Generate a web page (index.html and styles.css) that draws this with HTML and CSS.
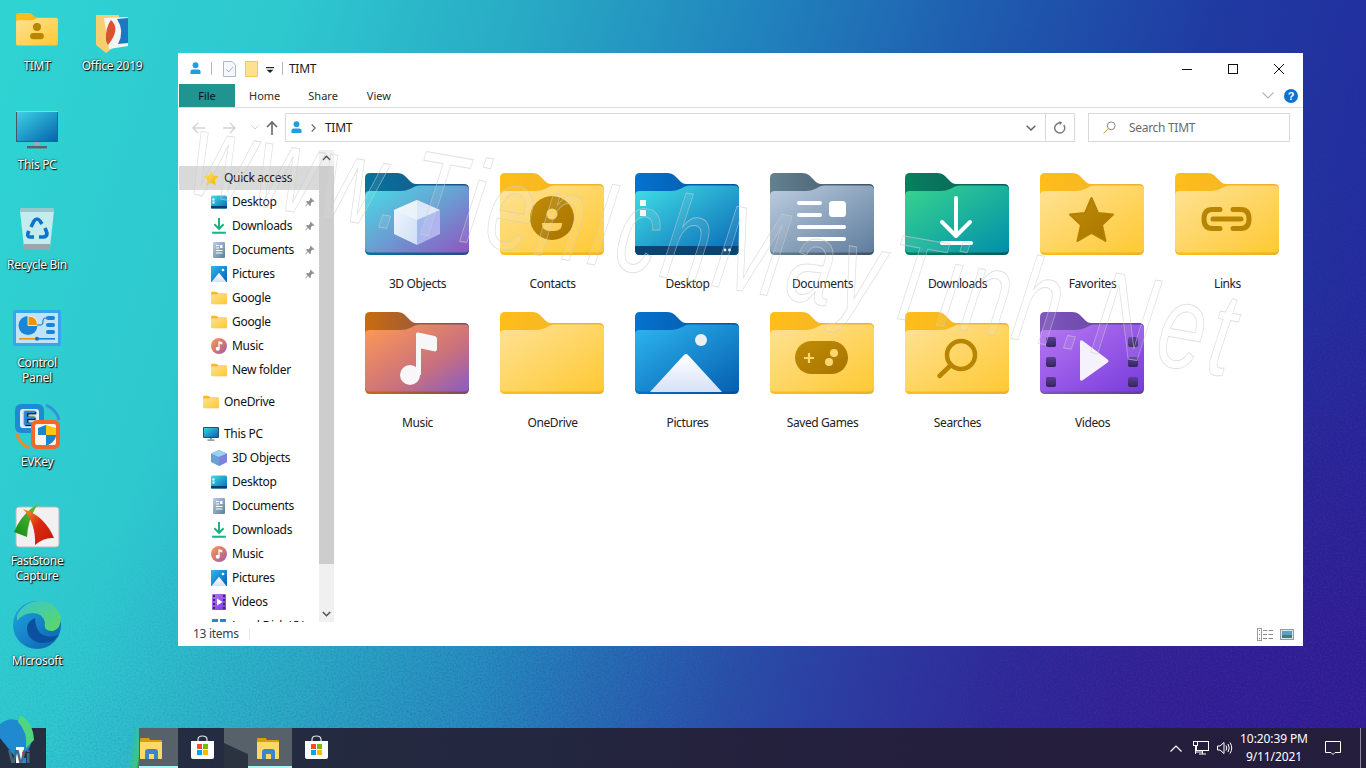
FILE: index.html
```html
<!DOCTYPE html>
<html lang="en">
<head>
<meta charset="utf-8">
<title>TIMT</title>
<link rel="stylesheet" href="styles.css">
</head>
<body>
<svg class="defs" width="0" height="0" aria-hidden="true">
  <defs>
    <linearGradient id="yF" x1="0" y1="0" x2="1" y2="1"><stop offset="0" stop-color="#fee295"/><stop offset="1" stop-color="#ffc933"/></linearGradient>
    <linearGradient id="yB" x1="0" y1="0" x2="1" y2="0"><stop offset="0" stop-color="#ffbe19"/><stop offset="1" stop-color="#edb02e"/></linearGradient>
    <linearGradient id="cubeF" x1="0" y1="0" x2="1" y2="1"><stop offset="0" stop-color="#45dfe6"/><stop offset=".5" stop-color="#6a9ed2"/><stop offset="1" stop-color="#8f55c2"/></linearGradient>
    <linearGradient id="cubeB" x1="0" y1="0" x2="1" y2="0"><stop offset="0" stop-color="#05739c"/><stop offset="1" stop-color="#204f86"/></linearGradient>
    <linearGradient id="deskF" x1="0" y1="0" x2="1" y2="1"><stop offset="0" stop-color="#41e0e6"/><stop offset="1" stop-color="#0a67b6"/></linearGradient>
    <linearGradient id="deskB" x1="0" y1="0" x2="1" y2="0"><stop offset="0" stop-color="#0573cf"/><stop offset="1" stop-color="#044f9c"/></linearGradient>
    <linearGradient id="docF" x1="0" y1="0" x2="1" y2="1"><stop offset="0" stop-color="#bccde0"/><stop offset="1" stop-color="#5f7d9c"/></linearGradient>
    <linearGradient id="docB" x1="0" y1="0" x2="1" y2="0"><stop offset="0" stop-color="#628290"/><stop offset="1" stop-color="#3f5064"/></linearGradient>
    <linearGradient id="dlF" x1="0" y1="0" x2="1" y2="1"><stop offset="0" stop-color="#37d58e"/><stop offset="1" stop-color="#008fab"/></linearGradient>
    <linearGradient id="dlB" x1="0" y1="0" x2="1" y2="0"><stop offset="0" stop-color="#0a7f5e"/><stop offset="1" stop-color="#065a5a"/></linearGradient>
    <linearGradient id="musF" x1="0" y1="0" x2="1" y2="1"><stop offset="0" stop-color="#ff9a52"/><stop offset=".62" stop-color="#c9707e"/><stop offset="1" stop-color="#8a5cc4"/></linearGradient>
    <linearGradient id="musB" x1="0" y1="0" x2="1" y2="0"><stop offset="0" stop-color="#c96c0e"/><stop offset="1" stop-color="#7a4a60"/></linearGradient>
    <linearGradient id="picF" x1="0" y1="0" x2="1" y2="1"><stop offset="0" stop-color="#2eb6f0"/><stop offset="1" stop-color="#055fb0"/></linearGradient>
    <linearGradient id="picM" x1="0" y1="0" x2="0" y2="1"><stop offset="0" stop-color="#ffffff"/><stop offset="1" stop-color="#d6e2f9"/></linearGradient>
    <linearGradient id="vidF" x1="0" y1="0" x2="1" y2="1"><stop offset="0" stop-color="#b678f2"/><stop offset="1" stop-color="#783bdb"/></linearGradient>
    <linearGradient id="vidB" x1="0" y1="0" x2="1" y2="0"><stop offset="0" stop-color="#7f57bd"/><stop offset="1" stop-color="#5c3f9c"/></linearGradient>
    <linearGradient id="vidS" x1="0" y1="0" x2="0" y2="1"><stop offset="0" stop-color="#5c3f92"/><stop offset="1" stop-color="#33235f"/></linearGradient>
    <linearGradient id="gold" x1="0" y1="0" x2="1" y2="1"><stop offset="0" stop-color="#c08c06"/><stop offset="1" stop-color="#a87400"/></linearGradient>
    <linearGradient id="cubeL" x1="0" y1="0" x2="1" y2="1"><stop offset="0" stop-color="#f2f7fc"/><stop offset="1" stop-color="#cfdff5"/></linearGradient>
    <linearGradient id="cubeR" x1="0" y1="0" x2="1" y2="1"><stop offset="0" stop-color="#94bdea"/><stop offset="1" stop-color="#beb0f0"/></linearGradient>
    <linearGradient id="star" x1="0" y1="0" x2="1" y2="1"><stop offset="0" stop-color="#ffe052"/><stop offset="1" stop-color="#f8b400"/></linearGradient>
    <linearGradient id="mon" x1="0" y1="0" x2="1" y2="1"><stop offset="0" stop-color="#3ad2e4"/><stop offset="1" stop-color="#0763ae"/></linearGradient>
    <linearGradient id="edgeA" x1="0" y1="0" x2="1" y2="1"><stop offset="0" stop-color="#1ea7e0"/><stop offset="1" stop-color="#0c5fb0"/></linearGradient>
    <linearGradient id="edgeB" x1="0" y1="0" x2="1" y2="1"><stop offset="0" stop-color="#37c6d0"/><stop offset="1" stop-color="#5fd85f"/></linearGradient>
    <linearGradient id="sailR" x1="0" y1="0" x2="1" y2="1"><stop offset="0" stop-color="#f0a020"/><stop offset=".45" stop-color="#dc2a12"/><stop offset="1" stop-color="#c01808"/></linearGradient>
    <linearGradient id="sailG" x1="1" y1="0" x2="0" y2="1"><stop offset="0" stop-color="#70c040"/><stop offset="1" stop-color="#0a8a14"/></linearGradient>
    <filter id="grain" x="0" y="0" width="100%" height="100%"><feTurbulence type="fractalNoise" baseFrequency=".55" numOctaves="2" seed="7"/><feColorMatrix values="0 0 0 0 .08  0 0 0 0 .03  0 0 0 0 .3  0 0 0 1.6 -.62"/></filter>
    <linearGradient id="grainFade" x1="0" y1="0" x2="1" y2="1"><stop offset=".38" stop-color="#fff" stop-opacity="0"/><stop offset=".75" stop-color="#fff"/></linearGradient>
    <mask id="grainMask"><rect width="1366" height="768" fill="url(#grainFade)"/></mask>

    <path id="fb" d="M5 0H32Q37 0 40 3L46 9Q48 11 51 11H99Q104 11 104 16V77Q104 82 99 82H5Q0 82 0 77V5Q0 0 5 0Z"/>
    <path id="ff" d="M0 22Q0 18 5 18H36Q41 18 45 16L50 13.5Q52 12.5 55 12.5H99Q104 12.5 104 17V75Q104 79.5 99 79.5H5Q0 79.5 0 75Z"/>

    <symbol id="i-folder" viewBox="0 0 104 82"><use href="#fb" fill="url(#yB)"/><use href="#ff" fill="url(#yF)"/></symbol>
    <symbol id="i-person" viewBox="0 0 12 14"><circle cx="6" cy="3.4" r="3.2" fill="#1f9fe0"/><path d="M0.5 13V10.5Q0.5 8 3 8H9Q11.5 8 11.5 10.5V13Z" fill="#1f9fe0"/></symbol>
    <symbol id="i-desktop" viewBox="0 0 16 13"><rect width="16" height="13" rx="1.5" fill="url(#deskF)"/><rect y="10.5" width="16" height="2.5" fill="#0a3f6a"/><rect x="1.5" y="3" width="2" height="2" fill="#fff"/><rect x="1.5" y="6" width="2" height="2" fill="#fff"/></symbol>
    <symbol id="i-down" viewBox="0 0 12 14"><path d="M6 0V9M2 5.5L6 9.5L10 5.5" fill="none" stroke="#17b083" stroke-width="1.7"/><rect y="12" width="12" height="1.8" fill="#18b48a"/></symbol>
    <symbol id="i-docs" viewBox="0 0 12 16"><rect width="12" height="16" rx="1" fill="url(#docF)"/><path d="M3 3.5H6M3 6H6M3 8.5H9.5M3 11H9.5" stroke="#fff"/><rect x="7" y="3" width="2.5" height="3" fill="#fff"/></symbol>
    <symbol id="i-pics" viewBox="0 0 14 14"><rect width="14" height="14" fill="url(#picF)"/><path d="M7 6L13.5 14H.5Z" fill="url(#picM)"/><circle cx="10.5" cy="3.5" r="1.2" fill="#fff"/></symbol>
    <symbol id="i-music" viewBox="0 0 16 16"><circle cx="8" cy="8" r="8" fill="url(#musF)"/><path d="M8 3.5V10.5" stroke="#fff" stroke-width="1.3"/><circle cx="6.7" cy="10.8" r="2" fill="#fff"/><path d="M8 3.3L11.3 4.3V6.6L8 5.6Z" fill="#fff"/></symbol>
    <symbol id="i-pc" viewBox="0 0 16 14"><rect width="16" height="11" rx="1" fill="#3a4a58"/><rect x="1" y="1" width="14" height="9" fill="url(#mon)"/><rect x="7" y="11" width="2" height="1.5" fill="#8a99a5"/><rect x="4.5" y="12.5" width="7" height="1.2" fill="#6a7884"/></symbol>
    <symbol id="i-cube" viewBox="0 0 16 16"><path d="M8 0L16 3.5V12L8 16L0 12V3.5Z" fill="#6a9fd8"/><path d="M8 0L16 3.5L8 7L0 3.5Z" fill="#9cd0ee"/><path d="M8 7L16 3.5V12L8 16Z" fill="#7a85d6"/></symbol>
    <symbol id="i-video" viewBox="0 0 14 16"><rect width="14" height="16" rx="1" fill="url(#vidF)"/><path d="M5 4.5L10.5 8L5 11.5Z" fill="#fff"/><path d="M1 2H3M1 6H3M1 10H3M1 14H3M11 2H13M11 6H13M11 10H13M11 14H13" stroke="#3a2a6a" stroke-width="2"/></symbol>
    <symbol id="i-pin" viewBox="0 0 10 10"><path d="M5.5 0.5L9.5 4.5L8.5 5L7.5 4.5L5.8 6.3L6 8L5 9L3 7L.8 9.4L.4 9L2.6 6.6L1 5L2 4L3.7 4.2L5.3 2.4L5 1.5Z" fill="#8f8f8f"/></symbol>
    <symbol id="i-explorer" viewBox="0 0 22 21"><path d="M1 0H9L10 2H21Q22 2 22 3V20Q22 21 21 21H1Q0 21 0 20V1Q0 0 1 0Z" fill="#d99e0e"/><path d="M0 4H22V20Q22 21 21 21H1Q0 21 0 20Z" fill="#ffd865"/><path d="M5 21V14Q5 11 8 11H15Q18 11 18 14V21H14V16H9V21Z" fill="#3a86cc"/></symbol>
    <symbol id="i-store" viewBox="0 0 23 24"><path d="M7 8V4.5Q7 1 11.5 1Q16 1 16 4.5V8" fill="none" stroke="#dfe6ea" stroke-width="1.2"/><path d="M0 6H23V22Q23 24 21 24H2Q0 24 0 22Z" fill="#fff"/><rect x="6" y="9" width="5" height="5" fill="#f25022"/><rect x="12" y="9" width="5" height="5" fill="#7fba00"/><rect x="6" y="15" width="5" height="5" fill="#00a4ef"/><rect x="12" y="15" width="5" height="5" fill="#ffb900"/></symbol>
  </defs>
</svg>

<svg class="grain" viewBox="0 0 1366 768" aria-hidden="true"><g mask="url(#grainMask)"><rect width="1366" height="768" filter="url(#grain)"/></g></svg>

<section class="desktop">
  <a class="dicon d-timt"><svg class="i-timt" viewBox="0 0 104 82"><use href="#i-folder"/><circle cx="52" cy="35" r="10" fill="#b98600"/><rect x="35" y="50" width="34" height="15" rx="7.5" fill="#b98600"/></svg><span>TIMT</span></a>
  <a class="dicon d-office"><svg class="i-office" viewBox="0 0 32 40"><path d="M0 2H23V6L24 30L10 40L0 32Z" fill="#f8cf70"/><path d="M8 5L32 4V33L13 36Z" fill="#f2f4f6"/><path d="M15 7Q25 16 12 32L10 28Q9 15 15 7Z" fill="#d9532e"/><path d="M21 6L32 5V30L22 31Q29 18 21 6Z" fill="#1d78c4"/></svg><span>Office 2019</span></a>
  <a class="dicon d-pc"><svg class="i-pcbig" viewBox="0 0 42 38"><rect width="42" height="31" fill="#4a5666"/><rect y="0" width="42" height="1" fill="#b8c2ca"/><rect x="1" y="1" width="40" height="29" fill="url(#mon)"/><rect x="18" y="31" width="6" height="4" fill="#a0a8ae"/><rect x="11" y="35" width="20" height="2.4" fill="#59626b"/></svg><span>This PC</span></a>
  <a class="dicon d-bin"><svg class="i-bin" viewBox="0 0 36 42"><path d="M1 3Q1 0 4 0H32Q35 0 35 3L31 39H5Z" fill="#c4ebee"/><path d="M1 3Q1 0 4 0H32Q35 0 35 3V4H1Z" fill="#98c8cc"/><rect x="5" y="36" width="26" height="6" fill="#9aa6ac"/><g fill="none" stroke="#0a74cf" stroke-width="3.6"><path d="M12 19L15 13Q18 9 21 13L23 16"/><path d="M26 20L28 25Q28 29 24 29H20"/><path d="M15 29H11Q8 29 9 25L10 23"/></g></svg><span>Recycle Bin</span></a>
  <a class="dicon d-cp"><svg class="i-cp" viewBox="0 0 48 36"><rect width="48" height="36" rx="2" fill="#37a4ee"/><rect x="3" y="3" width="42" height="30" fill="#bfe3f7"/><circle cx="15" cy="15.5" r="9.5" fill="#1a84d8"/><path d="M15 6V15.5H24.5Q24.5 6 15 6Z" fill="#f39200" stroke="#fff" stroke-width=".8"/><path d="M24 15H28Q30 15 30 12V10Q30 8 33 8" fill="none" stroke="#1a6fc0"/><g fill="#1a84d8"><rect x="33" y="6" width="9" height="4" rx="2"/><rect x="33" y="13" width="9" height="4" rx="2"/><rect x="33" y="20" width="9" height="4" rx="2"/></g><rect x="6" y="28" width="18" height="1.6" fill="#f39200"/><rect x="24" y="28" width="18" height="1.6" fill="#1a84d8"/><circle cx="24" cy="28.8" r="2" fill="#1a6fc0"/></svg><span>Control<br>Panel</span></a>
  <a class="dicon d-ev"><svg class="i-ev" viewBox="0 0 47 47"><path d="M32 2Q43 7 45 17" fill="none" stroke="#3a90d8" stroke-width="3"/><path d="M3 31Q5 41 15 45" fill="none" stroke="#ee8a2e" stroke-width="3"/><rect x="1" y="1" width="29" height="29" rx="6" fill="#1d8ad6"/><rect x="6" y="6" width="19" height="19" rx="3" fill="#dff1fb"/><text x="15.5" y="22" class="ev-e">E</text><rect x="17" y="17" width="29" height="29" rx="6" fill="#f0682a"/><rect x="21" y="21" width="21" height="21" rx="2" fill="#fbf3ee"/><path d="M32 22L42 25V33Q41 39 32 43Z" fill="#ffc80a"/><path d="M32 22L24 25V32H32ZM32 32H42V33Q41 39 32 43Z" fill="#1a86cf"/></svg><span>EVKey</span></a>
  <a class="dicon d-fs"><svg class="i-fs" viewBox="0 0 46 46"><rect x="2" y="4" width="43" height="40" rx="3" fill="#f1f1f1" stroke="#b8b8b8"/><path d="M25 0Q8 10 0 29L13 34Q14 14 25 0Z" fill="url(#sailG)"/><path d="M9 6Q30 12 40 35Q30 34 21 42Q22 20 9 6Z" fill="url(#sailR)"/></svg><span>FastStone<br>Capture</span></a>
  <a class="dicon d-edge"><svg class="i-edge" viewBox="0 0 48 48"><circle cx="24" cy="24" r="24" fill="url(#edgeA)"/><path d="M4 14Q12 0 26 0Q42 0 48 16Q48 28 40 30Q30 30 32 22Q30 12 20 12Q10 12 4 20Z" fill="url(#edgeB)"/><path d="M22 17Q10 22 16 35Q24 46 40 40L46 34Q36 38 28 33Q22 27 22 17Z" fill="#0c4f9e"/></svg><span>Microsoft</span></a>
</section>

<main class="window">
  <header class="titlebar">
    <svg class="tb-person"><use href="#i-person"/></svg>
    <i class="vsep"></i>
    <svg class="tb-doc" viewBox="0 0 13 16"><path d="M.5.5H9L12.5 4V15.5H.5Z" fill="#f4f7fb" stroke="#a9b8cc"/><path d="M3.5 8.5L5.7 11L10 6" fill="none" stroke="#a9b8cc"/></svg>
    <svg class="tb-ydoc" viewBox="0 0 13 16"><path d="M.5.5H12.5V15.5H.5Z" fill="#ffe08e" stroke="#f2c85a"/></svg>
    <svg class="tb-drop" viewBox="0 0 8 6"><rect width="8" height="1.2" fill="#222"/><path d="M.5 2.8H7.5L4 6Z" fill="#222"/></svg>
    <i class="vsep vsep-b"></i>
    <span class="title">TIMT</span>
    <div class="wctl">
      <svg viewBox="0 0 10 10"><path d="M0 5.5H10" stroke="#111"/></svg>
      <svg viewBox="0 0 10 10"><rect x=".5" y=".5" width="9" height="9" fill="none" stroke="#111"/></svg>
      <svg viewBox="0 0 10 10"><path d="M0 0L10 10M10 0L0 10" stroke="#111"/></svg>
    </div>
  </header>

  <nav class="tabs">
    <span class="tab tab-file">File</span>
    <span class="tab tab-home">Home</span>
    <span class="tab tab-share">Share</span>
    <span class="tab tab-view">View</span>
    <svg class="rib-chev" viewBox="0 0 12 7"><path d="M.5.5L6 6L11.5.5" fill="none" stroke="#b5b5b5" stroke-width="1.2"/></svg>
    <b class="help">?</b>
  </nav>

  <div class="addr-row">
    <svg class="nav nav-back" viewBox="0 0 13 12"><path d="M13 6H1M6 1L1 6L6 11" fill="none" stroke="#d3d3d3" stroke-width="1.4"/></svg>
    <svg class="nav nav-fwd" viewBox="0 0 13 12"><path d="M0 6H12M7 1L12 6L7 11" fill="none" stroke="#d3d3d3" stroke-width="1.4"/></svg>
    <svg class="nav nav-hist" viewBox="0 0 8 5"><path d="M.5.5L4 4L7.5.5" fill="none" stroke="#d3d3d3"/></svg>
    <svg class="nav nav-up" viewBox="0 0 12 14"><path d="M6 14V1M1 6L6 1L11 6" fill="none" stroke="#666" stroke-width="1.6"/></svg>
    <div class="addr">
      <svg class="addr-person"><use href="#i-person"/></svg>
      <svg class="addr-gt" viewBox="0 0 5 8"><path d="M.7.5L4.2 4L.7 7.5" fill="none" stroke="#666" stroke-width="1.1"/></svg>
      <span class="addr-text">TIMT</span>
      <svg class="addr-down" viewBox="0 0 10 6"><path d="M.7.7L5 5L9.3.7" fill="none" stroke="#666" stroke-width="1.5"/></svg>
      <span class="addr-refresh"><svg viewBox="0 0 12 13"><path d="M9.7 4A5 5 0 1 1 3.6 2.5L6 1.6" fill="none" stroke="#777" stroke-width="1.4"/><path d="M5.2 0L8.2 1.8L5.8 4.2Z" fill="#777"/></svg></span>
    </div>
    <div class="search">
      <svg viewBox="0 0 13 13"><circle cx="8.2" cy="4.8" r="3.9" fill="none" stroke="#888"/><path d="M5.4 7.6L.6 12.4" stroke="#c9985e"/></svg>
      <span>Search TIMT</span>
    </div>
  </div>

  <div class="main">
    <aside class="tree">
      <div class="row l1 sel"><svg class="ic" viewBox="0 0 16 16"><path d="M8 .5L10.3 5.6L15.8 6.2L11.7 10L12.9 15.5L8 12.7L3.1 15.5L4.3 10L.2 6.2L5.7 5.6Z" fill="url(#star)"/></svg><span>Quick access</span></div>
      <div class="row l2"><svg class="ic"><use href="#i-desktop"/></svg><span>Desktop</span><svg class="pin"><use href="#i-pin"/></svg></div>
      <div class="row l2"><svg class="ic"><use href="#i-down"/></svg><span>Downloads</span><svg class="pin"><use href="#i-pin"/></svg></div>
      <div class="row l2"><svg class="ic"><use href="#i-docs"/></svg><span>Documents</span><svg class="pin"><use href="#i-pin"/></svg></div>
      <div class="row l2"><svg class="ic"><use href="#i-pics"/></svg><span>Pictures</span><svg class="pin"><use href="#i-pin"/></svg></div>
      <div class="row l2"><svg class="ic"><use href="#i-folder"/></svg><span>Google</span></div>
      <div class="row l2"><svg class="ic"><use href="#i-folder"/></svg><span>Google</span></div>
      <div class="row l2"><svg class="ic"><use href="#i-music"/></svg><span>Music</span></div>
      <div class="row l2"><svg class="ic"><use href="#i-folder"/></svg><span>New folder</span></div>
      <div class="row l1 grp"><svg class="ic"><use href="#i-folder"/></svg><span>OneDrive</span></div>
      <div class="row l1 grp"><svg class="ic"><use href="#i-pc"/></svg><span>This PC</span></div>
      <div class="row l2"><svg class="ic"><use href="#i-cube"/></svg><span>3D Objects</span></div>
      <div class="row l2"><svg class="ic"><use href="#i-desktop"/></svg><span>Desktop</span></div>
      <div class="row l2"><svg class="ic"><use href="#i-docs"/></svg><span>Documents</span></div>
      <div class="row l2"><svg class="ic"><use href="#i-down"/></svg><span>Downloads</span></div>
      <div class="row l2"><svg class="ic"><use href="#i-music"/></svg><span>Music</span></div>
      <div class="row l2"><svg class="ic"><use href="#i-pics"/></svg><span>Pictures</span></div>
      <div class="row l2"><svg class="ic"><use href="#i-video"/></svg><span>Videos</span></div>
      <div class="row l2"><svg class="ic" viewBox="0 0 16 16"><path d="M1 5H7V1H1ZM9 1H15V7H9Z" fill="#1d8ad6"/></svg><span>Local Disk (C:)</span></div>
    </aside>
    <div class="vscroll">
      <span class="sbtn"><svg viewBox="0 0 9 6"><path d="M.8 5L4.5 1.3L8.2 5" fill="none" stroke="#555" stroke-width="1.6"/></svg></span>
      <span class="thumb"></span>
      <span class="track"></span>
      <span class="sbtn"><svg viewBox="0 0 9 6"><path d="M.8 1L4.5 4.7L8.2 1" fill="none" stroke="#555" stroke-width="1.6"/></svg></span>
    </div>
    <section class="grid">
      <figure class="item"><svg viewBox="0 0 104 82"><use href="#fb" fill="url(#cubeB)"/><use href="#ff" fill="url(#cubeF)"/><path d="M52 27L75 37V61L52 72Z" fill="url(#cubeR)"/><path d="M52 27L29 37V61L52 72Z" fill="url(#cubeL)"/><path d="M52 27L75 37L52 47L29 37Z" fill="#eef5fb" opacity=".75"/></svg><figcaption>3D Objects</figcaption></figure>
      <figure class="item"><svg viewBox="0 0 104 82"><use href="#i-folder"/><circle cx="52" cy="45" r="22" fill="url(#gold)"/><circle cx="52" cy="41" r="5.5" fill="#fbd061"/><path d="M42 50H62V51Q62 58 54 58H50Q42 58 42 51Z" fill="#fbd061"/></svg><figcaption>Contacts</figcaption></figure>
      <figure class="item"><svg viewBox="0 0 104 82"><use href="#fb" fill="url(#deskB)"/><use href="#ff" fill="url(#deskF)"/><path d="M0 73H104V77Q104 82 99 82H5Q0 82 0 77Z" fill="#0a4470"/><rect x="5" y="27" width="6" height="6" fill="#f2f7fb"/><rect x="5" y="37" width="6" height="6" fill="#f2f7fb"/><circle cx="90" cy="77" r="1.4" fill="#e8eef2"/><circle cx="94.5" cy="77" r="1.4" fill="#e8eef2"/></svg><figcaption>Desktop</figcaption></figure>
      <figure class="item"><svg viewBox="0 0 104 82"><use href="#fb" fill="url(#docB)"/><use href="#ff" fill="url(#docF)"/><g fill="#fff"><rect x="27" y="28" width="25" height="4" rx="2"/><rect x="27" y="40" width="25" height="4" rx="2"/><rect x="27" y="52" width="49" height="4" rx="2"/><rect x="27" y="64" width="49" height="4" rx="2"/><rect x="59" y="28" width="17" height="16" rx="3.5"/></g></svg><figcaption>Documents</figcaption></figure>
      <figure class="item"><svg viewBox="0 0 104 82"><use href="#fb" fill="url(#dlB)"/><use href="#ff" fill="url(#dlF)"/><path d="M51 25V63M37 49L51 63L65 49" fill="none" stroke="#fff" stroke-width="4" stroke-linecap="round" stroke-linejoin="round"/><rect x="35" y="68" width="33" height="4" rx="2" fill="#fff"/></svg><figcaption>Downloads</figcaption></figure>
      <figure class="item"><svg viewBox="0 0 104 82"><use href="#i-folder"/><path d="M51.5 25L58 40L73 41.5L62 52L65.5 68L51.5 60L37.5 68L41 52L30 41.5L45 40Z" fill="url(#gold)" stroke="#b37f02" stroke-width="2" stroke-linejoin="round"/></svg><figcaption>Favorites</figcaption></figure>
      <figure class="item"><svg viewBox="0 0 104 82"><use href="#i-folder"/><path d="M45 36.500H37Q29 36.500 29 46Q29 55.500 37 55.500H45M58 36.500H66Q74 36.500 74 46Q74 55.500 66 55.500H58M38 46H66" fill="none" stroke="#b78502" stroke-width="5" stroke-linecap="round"/></svg><figcaption>Links</figcaption></figure>
      <figure class="item"><svg viewBox="0 0 104 82"><use href="#fb" fill="url(#musB)"/><use href="#ff" fill="url(#musF)"/><circle cx="45" cy="63" r="10" fill="#f7f7f7"/><path d="M51 63V22Q51 20 53.500 20.600L69.500 24Q72 24.500 72 27V37Q72 40 69 39.300L56 36.500V63Z" fill="#f7f7f7"/></svg><figcaption>Music</figcaption></figure>
      <figure class="item"><svg viewBox="0 0 104 82"><use href="#i-folder"/></svg><figcaption>OneDrive</figcaption></figure>
      <figure class="item"><svg viewBox="0 0 104 82"><use href="#fb" fill="url(#deskB)"/><use href="#ff" fill="url(#picF)"/><circle cx="66" cy="28" r="6" fill="#eceff2"/><path d="M48 44Q51 40 54 44L87 80H15Z" fill="url(#picM)"/></svg><figcaption>Pictures</figcaption></figure>
      <figure class="item"><svg viewBox="0 0 104 82"><use href="#i-folder"/><rect x="25" y="29" width="53" height="33" rx="16.500" fill="url(#gold)"/><path d="M39 41V51M34 46H44" stroke="#fbd76e" stroke-width="2.200"/><circle cx="64" cy="41" r="4" fill="#fbd76e"/><circle cx="59" cy="50" r="4" fill="#fbd76e"/></svg><figcaption>Saved Games</figcaption></figure>
      <figure class="item"><svg viewBox="0 0 104 82"><use href="#i-folder"/><circle cx="56" cy="43" r="14" fill="none" stroke="#b78502" stroke-width="4.500"/><path d="M46 53L34.500 64" stroke="#b78502" stroke-width="4.500" stroke-linecap="round"/></svg><figcaption>Searches</figcaption></figure>
      <figure class="item"><svg viewBox="0 0 104 82"><use href="#fb" fill="url(#vidB)"/><use href="#ff" fill="url(#vidF)"/><g fill="url(#vidS)"><rect x="6" y="25" width="10" height="10" rx="2"/><rect x="6" y="45" width="10" height="10" rx="2"/><rect x="6" y="65" width="10" height="10" rx="2"/><rect x="88" y="25" width="10" height="10" rx="2"/><rect x="88" y="45" width="10" height="10" rx="2"/><rect x="88" y="65" width="10" height="10" rx="2"/></g><path d="M40 30Q40 27 43 29L67 47Q70 49 67 51L43 68Q40 70 40 67Z" fill="#f6f2fd"/></svg><figcaption>Videos</figcaption></figure>
    </section>
  </div>

  <footer class="status">
    <span class="count">13 items</span>
    <i class="stat-sep"></i>
    <svg class="view-a" viewBox="0 0 16 13"><rect x=".5" y=".5" width="4" height="12" fill="none" stroke="#9a9a9a"/><path d="M2 2.500h1" stroke="#888"/><path d="M2 6.500h1" stroke="#4aa3df"/><path d="M2 10.500h1" stroke="#c33"/><path d="M6 2.500H10M11.500 2.500H16M6 6.500H10M11.500 6.500H16M6 10.500H10M11.500 10.500H16" stroke="#8a8a8a"/></svg>
    <svg class="view-b" viewBox="0 0 14 11"><rect x=".5" y=".5" width="13" height="10" fill="#cfe6f2" stroke="#9a9a9a"/><rect x="2" y="2" width="10" height="4" fill="#5aa0cc"/><rect x="2" y="6" width="10" height="3" fill="#4a7a6a"/></svg>
  </footer>

  <svg class="wm" viewBox="0 0 1125 593" aria-hidden="true"><text class="wm-text" textLength="1510" lengthAdjust="spacing" transform="translate(8 140) rotate(10) scale(.7 1)">www.TienIchMayTinh.Net</text></svg>
</main>

<footer class="taskbar">
  <svg class="glitch" viewBox="0 0 150 70"><path d="M0 26Q15 14 30 32Q34 44 28 52L16 60L0 40Z" fill="#1f8ad0"/><path d="M20 17Q33 24 34 42L26 50Q28 34 18 24Z" fill="#4fd67e"/><rect x="16" y="49" width="8" height="16" fill="#fff"/><rect x="22" y="54" width="2" height="5" fill="#e8443a"/><rect x="23" y="60" width="3" height="5" fill="#1e8ae0"/><text x="8" y="65" class="wi">Wi</text></svg>
  <div class="tb-dark tb-s0"></div>
  <div class="tb-gap"></div>
  <div class="tb-seg tb-act tb-s1"><svg class="tbi-exp"><use href="#i-explorer"/></svg></div>
  <div class="tb-seg tb-dark tb-s2"><svg class="tbi-store"><use href="#i-store"/></svg></div>
  <div class="tb-seg tb-blob"></div>
  <div class="tb-seg tb-act tb-s4"><svg class="tbi-exp"><use href="#i-explorer"/></svg></div>
  <div class="tb-seg tb-dark tb-s5"><svg class="tbi-store"><use href="#i-store"/></svg></div>
  <div class="tb-rest tb-dark">
    <svg class="tray-chev" viewBox="0 0 12 7"><path d="M.5 6.500L6 1L11.500 6.500" fill="none" stroke="#fff" stroke-width="1.200"/></svg>
    <svg class="tray-net" viewBox="0 0 16 14"><rect x="3.500" y=".5" width="12" height="9" fill="none" stroke="#fff"/><rect x=".5" y=".5" width="4" height="4" fill="#241f4a" stroke="#fff"/><path d="M2.500 5V13M2.500 11H9.500M9.500 9.500V13M6 13H13" fill="none" stroke="#fff"/></svg>
    <svg class="tray-vol" viewBox="0 0 16 14"><path d="M.5 5V9H3L7 12.500V1.500L3 5Z" fill="none" stroke="#fff"/><path d="M9 4.500Q10.500 7 9 9.500M11 3Q13.500 7 11 11M13 1.500Q16.500 7 13 12.500" fill="none" stroke="#fff"/></svg>
    <div class="clock"><span>10:20:39 PM</span><span>9/11/2021</span></div>
    <svg class="tray-note" viewBox="0 0 16 15"><path d="M.5.5H15.500V11.500H10L8 13.500L6 11.500H.5Z" fill="none" stroke="#fff"/></svg>
    <i class="show-desk"></i>
  </div>
</footer>
</body>
</html>
```
FILE: styles.css
```css
* { box-sizing: border-box; }
html, body { margin: 0; height: 100%; overflow: hidden; }
body {
  position: relative;
  width: 1366px;
  height: 768px;
  font: 12px/16px "Noto Sans", "Open Sans", sans-serif;
  letter-spacing: -.3px;
  color: #1a1a1a;
  background:
    radial-gradient(700px 420px at 1180px 700px, rgba(62, 16, 140, .55), rgba(62, 16, 140, 0)),
    linear-gradient(108deg, #2fd4d2 0%, #2ec8cf 18%, #28a9c4 33%, #2184bd 47%, #1f5fb0 60%, #1f3aa2 76%, #21229a 100%);
}
.defs { position: absolute; }
svg { display: block; flex: none; }
.grain { position: absolute; inset: 0; width: 1366px; height: 768px; opacity: .55; }

/* desktop icons */
.desktop { position: absolute; inset: 0; }
.dicon {
  position: absolute;
  width: 74px;
  display: flex;
  flex-direction: column;
  align-items: center;
  color: #fff;
  text-align: center;
  line-height: 15px;
  text-shadow: 1px 1px 1px #000, 0 0 2px rgba(0, 0, 0, .8);
}
.d-timt { left: 0; top: 13px; }
.i-timt { width: 42px; height: 33px; margin-bottom: 12px; }
.d-office { left: 75px; top: 13px; }
.i-office { width: 32px; height: 40px; margin-bottom: 5px; }
.d-pc { left: 0; top: 111px; }
.i-pcbig { width: 42px; height: 38px; margin-bottom: 8px; }
.d-bin { left: 0; top: 208px; }
.i-bin { width: 36px; height: 42px; margin-bottom: 7px; }
.d-cp { left: 0; top: 310px; }
.i-cp { width: 48px; height: 36px; margin-bottom: 9px; }
.d-ev { left: 0; top: 403px; }
.i-ev { width: 47px; height: 47px; margin-bottom: 4px; }
.ev-e { font: bold 20px "Liberation Sans", sans-serif; fill: #1d8ad6; text-anchor: middle; }
.d-fs { left: 0; top: 503px; }
.i-fs { width: 46px; height: 46px; margin-bottom: 4px; }
.d-edge { left: 0; top: 601px; }
.i-edge { width: 48px; height: 48px; margin-bottom: 4px; }

/* window */
.window {
  position: absolute;
  left: 178px;
  top: 53px;
  width: 1125px;
  height: 593px;
  background: #fff;
  display: flex;
  flex-direction: column;
}
.titlebar { height: 31px; display: flex; align-items: center; padding-left: 12px; }
.tb-person { width: 11px; height: 13px; }
.vsep { width: 1px; height: 13px; background: #b5b5b5; margin-left: 10px; }
.tb-doc { width: 13px; height: 16px; margin-left: 11px; }
.tb-ydoc { width: 13px; height: 16px; margin-left: 9px; }
.tb-drop { width: 8px; height: 6px; margin-left: 8px; margin-top: 3px; }
.vsep-b { margin-left: 8px; }
.title { margin-left: 6px; }
.wctl { margin-left: auto; display: flex; gap: 35px; padding-right: 19px; }
.wctl svg { width: 10px; height: 10px; margin-left: 1px; }
.tabs { height: 24px; display: flex; align-items: center; border-bottom: 1px solid #dadbdc; position: relative; padding-left: 1px; }
.tab { font-size: 11px; line-height: 23px; color: #2d2d2d; letter-spacing: 0; }
.tab-file { width: 56px; height: 23px; background: #1f9490; color: #0e1414; text-align: center; }
.tab-home { margin-left: 14px; }
.tab-share { margin-left: 28px; }
.tab-view { margin-left: 29px; }
.rib-chev { width: 12px; height: 7px; margin-left: auto; }
.help {
  width: 14px; height: 14px; border-radius: 50%;
  margin: 0 5px 0 10px;
  background: #0a72cf; color: #fff;
  font: bold 11px/14px "Liberation Sans", sans-serif;
  text-align: center;
}
.addr-row { height: 29px; margin-top: 5px; display: flex; align-items: center; }
.nav { flex: none; }
.nav-back { width: 13px; height: 12px; margin-left: 14px; }
.nav-fwd { width: 13px; height: 12px; margin-left: 18px; }
.nav-hist { width: 8px; height: 5px; margin-left: 15px; }
.nav-up { width: 12px; height: 14px; margin-left: 7px; }
.addr {
  width: 790px; height: 29px; margin-left: 7px;
  border: 1px solid #d9d9d9;
  display: flex; align-items: center; padding-left: 5px;
}
.addr-person { width: 11px; height: 13px; }
.addr-gt { width: 5px; height: 8px; margin-left: 9px; }
.addr-text { margin-left: 9px; }
.addr-down { width: 10px; height: 6px; margin-left: auto; }
.addr-refresh {
  width: 29px; height: 27px; margin-left: 9px;
  border-left: 1px solid #d9d9d9;
  display: flex; align-items: center; justify-content: center;
}
.addr-refresh svg { width: 12px; height: 13px; }
.search {
  width: 202px; height: 29px; margin-left: 13px;
  border: 1px solid #d9d9d9;
  display: flex; align-items: center; padding-left: 14px; color: #6a6a6a;
}
.search svg { width: 13px; height: 13px; }
.search span { margin-left: 13px; }

.main { height: 472px; margin-top: 8px; display: flex; overflow: hidden; }
.tree { width: 140px; margin-left: 1px; padding-top: 16px; overflow: hidden; flex: none; }
.row { height: 24px; display: flex; align-items: center; white-space: nowrap; color: #111; }
.row.l1 { padding-left: 24px; }
.row.l2 { padding-left: 32px; }
.row.sel { background: #d9d9d9; }
.row.grp { margin-top: 8px; }
.ic { width: 16px; height: 16px; margin-right: 5px; }
.pin { width: 10px; height: 10px; margin-left: auto; margin-right: 4px; }
.vscroll { width: 15px; display: flex; flex-direction: column; background: #f0f0f0; flex: none; }
.sbtn { height: 16px; display: flex; align-items: center; justify-content: center; }
.sbtn svg { width: 9px; height: 6px; }
.thumb { height: 398px; background: #cdcdcd; }
.track { flex: 1; }
.grid {
  flex: 1;
  display: grid;
  grid-template-columns: repeat(7, 135px);
  grid-auto-rows: 139px;
  padding: 23px 0 0 15px;
}
.item { margin: 0; display: flex; flex-direction: column; align-items: center; }
.item svg { width: 104px; height: 82px; }
.item figcaption { margin-top: 21px; padding-left: 2px; color: #222; letter-spacing: -.4px; }

.status { height: 24px; display: flex; align-items: center; padding-left: 15px; }
.count { color: #38404e; }
.stat-sep { width: 1px; height: 12px; background: #e8e8e8; margin-left: 10px; }
.view-a { width: 16px; height: 13px; margin-left: auto; }
.view-b { width: 14px; height: 11px; margin: 0 9px 0 7px; }
.wm { position: absolute; inset: 0; width: 1125px; height: 593px; pointer-events: none; overflow: visible; }
.wm-text {
  font: italic 120px "Liberation Sans", sans-serif;
  letter-spacing: 0;
  fill: rgba(255, 255, 255, .08);
  stroke: rgba(205, 205, 205, .6);
  stroke-width: 1px;
}

/* taskbar */
.taskbar { position: absolute; left: 0; right: 0; bottom: 0; height: 40px; display: flex; }
.glitch { position: absolute; left: 0; top: -30px; width: 150px; height: 70px; z-index: 2; overflow: visible; }
.wi { font: bold 19px "Liberation Sans", sans-serif; fill: #44697c; }
.tb-dark { background: rgba(35, 30, 50, .9); }
.tb-s0 { width: 46px; }
.tb-gap { width: 93px; background: linear-gradient(100deg, transparent 88%, #3cc87a 97%, #56616a 100%); }
.tb-seg { display: flex; align-items: center; justify-content: center; }
.tb-act { background: #56616a; box-shadow: inset 0 -2px 0 #a8f4f8; }
.tb-s1 { width: 39px; padding-right: 15px; }
.tb-s2 { width: 46px; padding-left: 2px; }
.tb-blob { width: 24px; background: linear-gradient(205deg, #56616a 50%, #2a333f 52%); }
.tb-s4 { width: 44px; padding-right: 4px; }
.tb-s5 { width: 42px; padding-left: 7px; }
.tbi-exp { width: 22px; height: 21px; }
.tbi-store { width: 23px; height: 24px; margin-top: -3px; }
.tb-rest { flex: 1; display: flex; align-items: center; color: #fff; }
.tray-chev { width: 12px; height: 7px; margin-left: 836px; }
.tray-net { width: 16px; height: 14px; margin-left: 11px; }
.tray-vol { width: 16px; height: 14px; margin-left: 8px; }
.clock { width: 70px; margin-left: 6px; display: flex; flex-direction: column; align-items: center; line-height: 18px; white-space: nowrap; letter-spacing: -.1px; }
.tray-note { width: 16px; height: 15px; margin-left: 16px; }
.show-desk { width: 1px; height: 40px; margin-left: 19px; background: #8a8a98; }
```
